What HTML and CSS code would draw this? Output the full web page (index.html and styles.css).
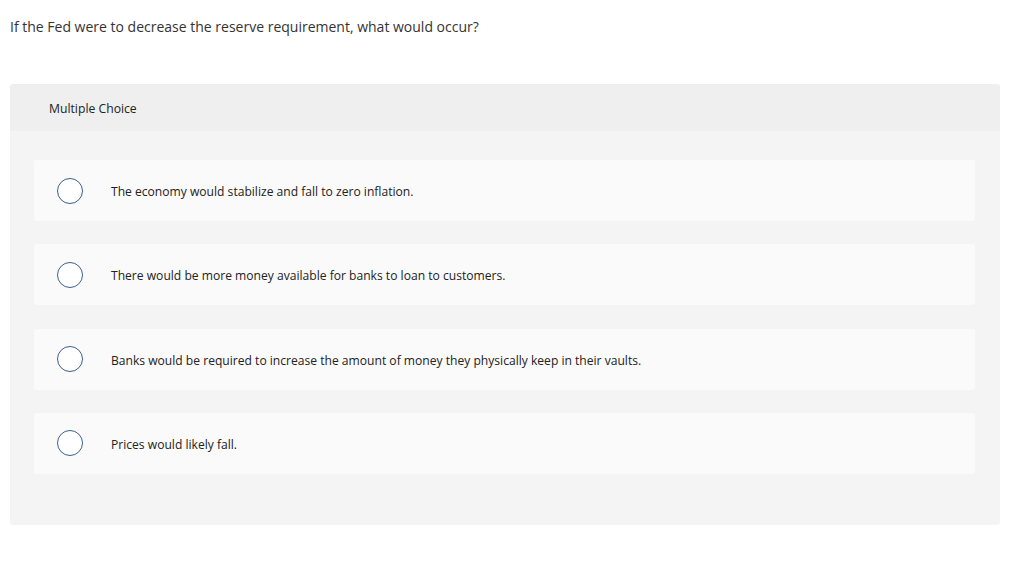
FILE: index.html
```html
<!DOCTYPE html>
<html>
<head>
<meta charset="utf-8">
<link rel="stylesheet" href="styles.css">
</head>
<body>
<p class="question">If the Fed were to decrease the reserve requirement, what would occur?</p>
<section class="panel">
  <div class="panel-header">Multiple Choice</div>
  <div class="panel-body">
    <label class="option"><span class="radio"></span><span class="option-text">The economy would stabilize and fall to zero inflation.</span></label>
    <label class="option"><span class="radio"></span><span class="option-text">There would be more money available for banks to loan to customers.</span></label>
    <label class="option"><span class="radio"></span><span class="option-text">Banks would be required to increase the amount of money they physically keep in their vaults.</span></label>
    <label class="option"><span class="radio"></span><span class="option-text">Prices would likely fall.</span></label>
  </div>
</section>
</body>
</html>
```
FILE: styles.css
```css
html, body {
  margin: 0;
  padding: 0;
  background: #ffffff;
}
body {
  font-family: "Open Sans", "Liberation Sans", sans-serif;
  color: #333333;
  padding: 0 24px 0 10px;
}
.question {
  margin: 0;
  padding-top: 18px;
  font-size: 14px;
  line-height: 18px;
  color: #333;
}
.panel {
  margin-top: 48px;
  width: 990px;
  border-radius: 3px;
  overflow: hidden;
  background: #f4f4f4;
}
.panel-header {
  background: #efefef;
  height: 47px;
  display: flex;
  align-items: center;
  padding-left: 39px;
  padding-top: 1px;
  box-sizing: border-box;
  font-size: 12.2px;
  color: #222;
}
.panel-body {
  padding: 29px 25px 51px 24px;
  display: flex;
  flex-direction: column;
  gap: 23.33px;
}
.option {
  display: flex;
  align-items: center;
  height: 61px;
  background: #fafafa;
  border-radius: 3px;
  padding-left: 23px;
}
.radio {
  width: 24px;
  height: 24px;
  border: 1px solid #3a5f8f;
  border-radius: 50%;
  background: #fff;
  flex: none;
}
.option-text {
  margin-left: 28px;
  padding-top: 2px;
  font-size: 12.1px;
  color: #222;
}
```
